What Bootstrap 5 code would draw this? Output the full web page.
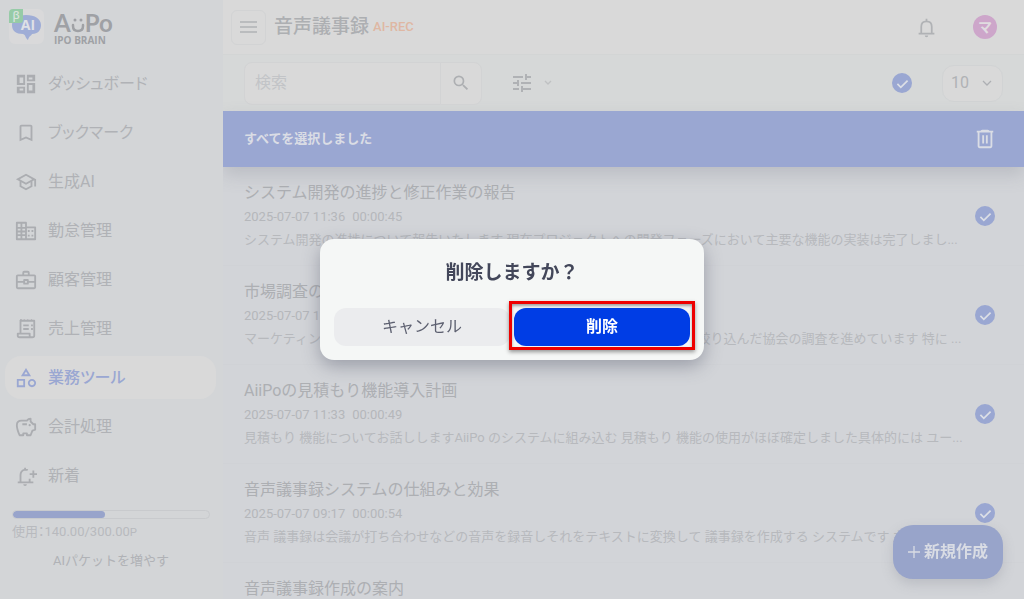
<!DOCTYPE html>
<html lang="ja">
<head>
<meta charset="utf-8">
<meta name="viewport" content="width=device-width, initial-scale=1">
<title>音声議事録</title>
<link href="https://cdn.jsdelivr.net/npm/bootstrap@5.3.0/dist/css/bootstrap.min.css" rel="stylesheet">
<style>
  :root { --ink: #b0b2b6; --ink-soft: #b8babe; --accent: #9aa7d2; --edge: #d2d3d4; }
  body { font-family: Roboto, "Noto Sans CJK JP", sans-serif; background: #d2d4d8; color: var(--ink); }
  svg { display: block; flex: none; fill: currentColor; }
  .line { fill: none; stroke: currentColor; stroke-width: 2; stroke-linejoin: round; }
  .side { width: 223px; background: #d3d5d7; font-feature-settings: "palt"; }
  .brand { height: 62px; padding: 8px 0 0 8px; color: #9fa1a5; text-decoration: none; }
  .brand-name { font: 700 24px/24px Lato, sans-serif; margin-top: 3px; }
  .brand-sub { font: 700 10px/14px "Open Sans", sans-serif; margin-top: -2px; }
  .side-menu { gap: 6px; padding: 0 7px 0 5px; }
  .side-menu .nav-link { height: 43px; padding: 0 10px; gap: 11px; font-size: 16px; color: var(--ink); border-radius: 16px; }
  .side-menu .nav-link svg { color: #abadb1; }
  .side-menu .nav-link.active { background: #d9d9d9; color: var(--accent); font-weight: 500; }
  .side-menu .nav-link.active svg { color: var(--accent); }
  .usage { padding: 13px 13px 0 12px; font-size: 13px; color: var(--ink-soft); }
  .usage .progress { height: 9px; border: 1px solid #c8cacd; border-radius: 5px; background: transparent; }
  .usage .progress-bar { background: #98a4cb; border-radius: 5px; }
  .usage-text { line-height: 20px; margin: 3px 0 8px; }
  .more { font-size: 13px; line-height: 20px; color: var(--ink); padding: 0; border: 0; }
  .topbar { height: 55px; background: #d9d9d9; border-bottom: 1px solid #d3d5d5; padding: 0 27px 0 8px; }
  .burger { width: 35px; height: 35px; padding: 0; border: 1px solid var(--edge); border-radius: 6px; color: #b0b2b5; }
  .page-title { font-size: 19px; line-height: 28px; color: #adafb2; margin: 0 4px 0 8px; }
  .rec { font-size: 13px; font-weight: 500; color: #dfb7a3; }
  .avatar { width: 24px; height: 24px; background: #cda6ca; color: #e0dce0; font-size: 14px; line-height: 24px; font-weight: 700; margin-left: 36px; }
  .tools { height: 56px; background: #d6d8d8; padding: 0 21px; }
  .search { width: 238px; height: 43px; }
  .search .form-control, .search .btn { background: #d9d9d9; border: 1px solid var(--edge); border-radius: 8px; color: #adafb2; }
  .search .form-control { font-size: 16px; padding: 0 10px; }
  .search .form-control::placeholder { color: #c2c4c7; opacity: 1; }
  .search .btn { width: 42px; padding: 0; }
  .plain { padding: 0; border: 0; color: #b0b2b5; }
  .tick { width: 20px; height: 20px; flex: none; margin: 0; border: 0; background-color: var(--accent); }
  .tick[type=checkbox] { border-radius: 50%; }
  .tick:checked { background-color: var(--accent); background-size: 17px;
    background-image: url("data:image/svg+xml,%3csvg xmlns='http://www.w3.org/2000/svg' viewBox='0 0 20 20'%3e%3cpath fill='none' stroke='%23dcdfe6' stroke-width='2' d='M4 10.5l4 4 8-8'/%3e%3c/svg%3e"); }
  .count { width: 61px; height: 37px; padding: 0 8px; margin-left: 30px; font-size: 16px; border: 1px solid #d1d3d4; border-radius: 12px; color: #b0b2b5; background-color: #d9d9d9; background-size: 12px; background-position: right 9px center;
    background-image: url("data:image/svg+xml,%3csvg xmlns='http://www.w3.org/2000/svg' viewBox='0 0 12 12'%3e%3cpath fill='none' stroke='%23adafb3' stroke-width='1.3' d='M2 4l4 4 4-4'/%3e%3c/svg%3e"); }
  .selected-bar { height: 56px; padding: 0 28px 0 21px; background: var(--accent); color: #dadde5; font-size: 13px; font-weight: 700; box-shadow: 0 8px 16px rgba(120,125,135,.25); position: relative; }
  .rec-list > li { height: 99px; padding: 14px 29px 14px 21px; border-bottom: 1px solid #d0d2d6; }
  .rec-title { font-size: 16px; line-height: 24px; margin: 0; font-weight: 400; color: #adafb3; }
  .rec-time { font-size: 13px; line-height: 24px; color: #b5b7bb; gap: 7px; }
  .rec-note { font-size: 13px; line-height: 22px; color: #b7b9bd; margin: 0; }
  .create { position: fixed; right: 21px; bottom: 20px; height: 54px; width: 110px; padding: 0; gap: 4px; border: 0; border-radius: 20px; background: #98a4ca; color: #d9dce4; font-size: 16px; font-weight: 700; box-shadow: 0 5px 12px rgba(120,125,135,.25); }
  .create:hover { background: #98a4ca; color: #d9dce4; }
  .veil { position: fixed; inset: 0; z-index: 10; }
  .ask { width: 384px; padding: 14px; border-radius: 14px; background: #f5f7f6; box-shadow: 0 6px 18px rgba(70,74,95,.4); }
  .ask h2 { font-size: 19px; line-height: 40px; font-weight: 700; color: #43475a; margin: 0 0 15px; }
  .ask .btn { height: 38px; padding: 0; border: 0; border-radius: 12px; font-size: 16px; }
  .cancel { background: #ebecee; color: #5d6070; }
  .danger-go { background: #003de5; color: #fff; font-weight: 700; }
  .cancel:hover { background: #e4e5e8; }
  .danger-go:hover { background: #0036cc; color: #fff; }
  .frame { position: absolute; inset: -7px -5px -4px; border: 3px solid #ee0000; box-shadow: 0 2px 4px rgba(0,0,0,.4), inset 0 2px 3px rgba(0,0,0,.35); pointer-events: none; }
</style>
</head>
<body class="overflow-hidden">
<div class="d-flex vh-100">
  <aside class="side flex-shrink-0">
    <a href="#" class="brand d-flex gap-2 align-items-start">
      <svg width="38" height="38" viewBox="0 0 38 38">
        <rect x="1" y="1" width="35" height="35" rx="6" fill="#d9d9da"/>
        <path fill="#9fadd6" d="M18 7c9 0 15 4 15 10 0 5-3 9-9 9-1 2-3 2-4 6-3-2-2-5-5-6-7 0-11-3-11-9 0-7 6-10 14-10z"/>
        <path fill="#96cba7" d="M5 1h10v11q0 3-3 3H1V5q0-4 4-4z"/>
        <text x="8" y="11" text-anchor="middle" font-family="Open Sans" font-weight="600" font-size="11" fill="#d9e2dc">β</text>
        <text x="20" y="22" text-anchor="middle" font-family="Open Sans" font-weight="700" font-size="14" fill="#dfe1e6">AI</text>
      </svg>
      <span>
        <span class="brand-name d-flex align-items-center">A<svg width="14" height="24" viewBox="0 0 14 24"><circle cx="4" cy="9" r="1.500"/><circle cx="10" cy="9" r="1.500"/><path d="M2 14v1q0 5 5 5t5-5v-1" fill="none" stroke="currentColor" stroke-width="2.500" stroke-linecap="round"/></svg>Po</span>
        <span class="brand-sub d-block">IPO BRAIN</span>
      </span>
    </a>
    <nav class="side-menu nav flex-column">
      <a href="#" class="nav-link d-flex align-items-center"><svg width="22" height="22" viewBox="0 0 24 24"><path d="M19 5v2h-4V5h4M9 5v6H5V5h4m10 8v6h-4v-6h4M9 17v2H5v-2h4M22 2h-9v7h9V2zM11 2H2v11h9V2zm11 9h-9v11h9V11zm-11 4H2v7h9v-7z"/></svg>ダッシュボード</a>
      <a href="#" class="nav-link d-flex align-items-center"><svg width="22" height="22" viewBox="0 0 24 24"><path d="M17 3H7c-1.100 0-2 .9-2 2v16l7-3 7 3V5c0-1.100-.9-2-2-2zm0 15l-5-2.180L7 18V5h10v13z"/></svg>ブックマーク</a>
      <a href="#" class="nav-link d-flex align-items-center"><svg width="22" height="22" viewBox="0 0 24 24"><path d="M12 3L1 9l4 2.180v6L12 21l7-3.820v-6l2-1.090V17h2V9L12 3zm6.820 6L12 12.720 5.180 9 12 5.280 18.820 9zM17 15.990l-5 2.730-5-2.730v-3.720L12 15l5-2.730v3.720z"/></svg>生成AI</a>
      <a href="#" class="nav-link d-flex align-items-center"><svg width="22" height="22" viewBox="0 0 24 24"><path class="line" stroke-linejoin="miter" d="M2 3h10v18H2zM2 8.500h10M2 12.500h10M2 16.500h10M7 3v18M12 8h10v13H12"/><path d="M14 11h2v2h-2zM18 11h2v2h-2zM14 16h2v2h-2zM18 16h2v2h-2z"/></svg>勤怠管理</a>
      <a href="#" class="nav-link d-flex align-items-center"><svg width="22" height="22" viewBox="0 0 24 24"><path class="line" d="M3 7h18q1 0 1 1v12q0 1-1 1H3q-1 0-1-1V8q0-1 1-1zM9 7V4q0-1 1-1h4q1 0 1 1v3M2 14h8m4 0h8M10 12h4v4h-4z"/></svg>顧客管理</a>
      <a href="#" class="nav-link d-flex align-items-center"><svg width="22" height="22" viewBox="0 0 24 24"><path class="line" d="M6 16V3h15v16q0 2-2 2H5q-2 0-2-2v-2h13v2q0 2 2 2M9 8h6M9 12h6M17.500 8h2M17.500 12h2"/><path d="M6 1h1l1 2H5zM10 1l1.500 2h-3zM14 1l1.500 2h-3zM18 1l1.500 2h-3z"/></svg>売上管理</a>
      <a href="#" class="nav-link active d-flex align-items-center" aria-current="page"><svg width="22" height="22" viewBox="0 0 24 24"><path d="M12 1l-5.500 9h11L12 1zm0 3.840L13.930 8h-3.870L12 4.840zM18.500 13c-2.490 0-4.500 2.010-4.500 4.500s2.010 4.500 4.500 4.500 4.500-2.010 4.500-4.500-2.010-4.500-4.500-4.500zm0 7c-1.380 0-2.500-1.120-2.500-2.500s1.120-2.500 2.500-2.500 2.500 1.120 2.500 2.500-1.120 2.500-2.500 2.500zM2 22h9v-9H2v9zm2-7h5v5H4v-5z"/></svg>業務ツール</a>
      <a href="#" class="nav-link d-flex align-items-center"><svg width="22" height="22" viewBox="0 0 24 24"><path class="line" d="M5 21Q2 14 2 10q0-5 5-5h6q1.500-2 4-2v3l3 3h2v6l-3 1-2 5h-4v-2h-4v2zM8 9h5"/><circle cx="16" cy="10" r="1.200"/></svg>会計処理</a>
      <a href="#" class="nav-link d-flex align-items-center"><svg width="22" height="22" viewBox="0 0 24 24"><path class="line" d="M3 19h17M6 19v-8q0-5 5-6 2 0 3 .5M16 15v4M11 5V3M20 6v8M16 10h8"/><path d="M9 21h4q0 2-2 2t-2-2z"/></svg>新着</a>
    </nav>
    <div class="usage">
      <div class="progress" role="progressbar" aria-label="使用量" aria-valuenow="140" aria-valuemin="0" aria-valuemax="300"><div class="progress-bar" style="width:46.7%"></div></div>
      <p class="usage-text">使用：140.00/300.00<small>P</small></p>
      <button type="button" class="btn more w-100">AIパケットを増やす</button>
    </div>
  </aside>

  <main class="flex-fill overflow-hidden">
    <header class="topbar d-flex align-items-center">
      <button type="button" class="btn burger d-flex align-items-center justify-content-center" aria-label="メニュー"><svg width="17" height="14" viewBox="0 0 17 14"><path class="line" style="stroke-width:1.500" d="M0 2h17M0 7h17M0 12h17"/></svg></button>
      <h1 class="page-title">音声議事録</h1><span class="rec">AI-REC</span>
      <button type="button" class="btn plain ms-auto" aria-label="通知"><svg width="21" height="21" viewBox="0 0 24 24"><path class="line" d="M3 19h18M6 19v-8q0-6 6-6t6 6v8M12 5V2"/><path d="M10 21h4q0 2-2 2t-2-2z"/></svg></button>
      <span class="avatar rounded-circle text-center">マ</span>
    </header>
    <div class="tools d-flex align-items-center">
      <form class="input-group search flex-nowrap">
        <input type="search" class="form-control" placeholder="検索" aria-label="検索">
        <button type="button" class="btn d-flex align-items-center justify-content-center" aria-label="検索する"><svg width="20" height="20" viewBox="0 0 24 24"><path d="M15.500 14h-.79l-.28-.27A6.471 6.471 0 0 0 16 9.500 6.500 6.500 0 1 0 9.500 16c1.610 0 3.090-.59 4.230-1.570l.27.28v.79l5 4.990L20.490 19l-4.990-5zm-6 0C7.010 14 5 11.990 5 9.500S7.010 5 9.500 5 14 7.010 14 9.500 11.990 14 9.500 14z"/></svg></button>
      </form>
      <button type="button" class="btn plain d-flex align-items-center gap-2 ms-4 ps-1" aria-label="絞り込み"><svg width="24" height="24" viewBox="0 0 24 24"><path d="M3 17v2h6v-2H3zM3 5v2h10V5H3zm10 16v-2h8v-2h-8v-2h-2v6h2zM7 9v2H3v2h4v2h2V9H7zm14 4v-2H11v2h10zm-6-4h2V7h4V5h-4V3h-2v6z"/></svg><svg width="12" height="12" viewBox="0 0 12 12" opacity=".6"><path class="line" style="stroke-width:1.300" d="M3 4l3 3 3-3"/></svg></button>
      <input type="checkbox" class="form-check-input tick ms-auto" aria-label="すべて選択" checked>
      <select class="form-select count" aria-label="表示件数"><option>10</option><option>20</option></select>
    </div>
    <div class="selected-bar d-flex align-items-center justify-content-between">
      <span>すべてを選択しました</span>
      <button type="button" class="btn plain text-reset" aria-label="選択した項目を削除"><svg width="22" height="22" viewBox="0 0 24 24"><path class="line" d="M3 4h18M8 4q0-1 1-1h6q1 0 1 1M5 5v15q0 1 1 1h12q1 0 1-1V5M10 8v9M14 8v9"/></svg></button>
    </div>
    <ul class="rec-list list-unstyled m-0">
      <li class="d-flex align-items-center">
        <div class="flex-fill text-nowrap"><h2 class="rec-title">システム開発の進捗と修正作業の報告</h2><div class="rec-time d-flex"><span>2025-07-07 11:36</span><span>00:00:45</span></div><p class="rec-note">システム開発の進捗について報告いたします 現在プロジェクトへの開発フェーズにおいて主要な機能の実装は完了しまし...</p></div>
        <input type="checkbox" class="form-check-input tick" aria-label="システム開発の進捗と修正作業の報告" checked>
      </li>
      <li class="d-flex align-items-center">
        <div class="flex-fill text-nowrap"><h2 class="rec-title">市場調査の進捗報告</h2><div class="rec-time d-flex"><span>2025-07-07 11:35</span><span>00:00:52</span></div><p class="rec-note">マーケティング戦略の立案に向けて市場の動向を把握するため対象とする層を絞り込んだ協会の調査を進めています 特に ...</p></div>
        <input type="checkbox" class="form-check-input tick" aria-label="市場調査の進捗報告" checked>
      </li>
      <li class="d-flex align-items-center">
        <div class="flex-fill text-nowrap"><h2 class="rec-title">AiiPoの見積もり機能導入計画</h2><div class="rec-time d-flex"><span>2025-07-07 11:33</span><span>00:00:49</span></div><p class="rec-note">見積もり 機能についてお話ししますAiiPo のシステムに組み込む 見積もり 機能の使用がほぼ確定しました具体的には ユー...</p></div>
        <input type="checkbox" class="form-check-input tick" aria-label="AiiPoの見積もり機能導入計画" checked>
      </li>
      <li class="d-flex align-items-center">
        <div class="flex-fill text-nowrap"><h2 class="rec-title">音声議事録システムの仕組みと効果</h2><div class="rec-time d-flex"><span>2025-07-07 09:17</span><span>00:00:54</span></div><p class="rec-note">音声 議事録は会議が打ち合わせなどの音声を録音しそれをテキストに変換して 議事録を作成する システムです 主...</p></div>
        <input type="checkbox" class="form-check-input tick" aria-label="音声議事録システムの仕組みと効果" checked>
      </li>
      <li><h2 class="rec-title">音声議事録作成の案内</h2></li>
    </ul>
  </main>
</div>

<button type="button" class="btn create d-flex align-items-center justify-content-center"><svg width="12" height="12" viewBox="0 0 12 12"><path class="line" style="stroke-width:1.300" d="M0 6h12M6 0v12"/></svg>新規作成</button>

<div class="veil d-flex align-items-center justify-content-center">
  <div class="ask" role="dialog" aria-modal="true" aria-labelledby="ask-title">
    <h2 id="ask-title" class="text-center">削除しますか？</h2>
    <div class="d-flex gap-1">
      <button type="button" class="btn cancel flex-fill w-50">キャンセル</button>
      <div class="position-relative w-50"><button type="button" class="btn danger-go w-100">削除</button><span class="frame"></span></div>
    </div>
  </div>
</div>
<script src="https://cdn.jsdelivr.net/npm/bootstrap@5.3.0/dist/js/bootstrap.bundle.min.js"></script>
</body>
</html>
